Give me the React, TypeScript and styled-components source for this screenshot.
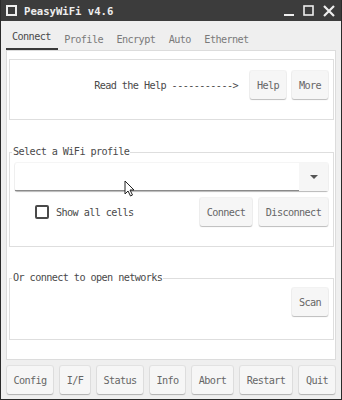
import React from "react";
import styled, { createGlobalStyle } from "styled-components";

const Global = createGlobalStyle`
  html, body { margin: 0; padding: 0; background: #ffffff; }
  * { box-sizing: border-box; }
`;

const mono = `"DejaVu Sans Mono", "Liberation Mono", monospace`;

const Window = styled.div`
  width: 342px;
  height: 400px;
  display: flex;
  flex-direction: column;
  background: #efefef;
  border: 1px solid #2a2a2a;
  border-top: none;
  font-family: ${mono};
  font-size: 10.2px;
  letter-spacing: -0.6px;
  color: #444;
`;

const TitleBar = styled.div`
  height: 21px;
  background: #3c3c3c;
  display: flex;
  align-items: center;
  padding: 0 6px 0 5px;
  color: #eeeeee;
  flex-shrink: 0;
  letter-spacing: 0;
`;

const TitleIcon = styled.div`
  width: 11px;
  height: 11px;
  border: 2px solid #eeeeee;
  background: #3c3c3c;
  margin-right: 7px;
`;

const TitleText = styled.div`
  font-family: ${mono};
  font-weight: bold;
  font-size: 10.6px;
  flex: 1;
`;

const TitleControls = styled.div`
  display: flex;
  align-items: center;
  gap: 9px;
`;

const Body = styled.div`
  flex: 1;
  display: flex;
  flex-direction: column;
  padding: 0 5px 0 5px;
`;

const TabRow = styled.div`
  display: flex;
  height: 29px;
  align-items: flex-end;
  padding-left: 0;
`;

const Tab = styled.div<{ $active?: boolean }>`
  height: 100%;
  display: flex;
  align-items: flex-end;
  padding: 0 7.5px 0 6px;
  color: ${(p) => (p.$active ? "#4a4a4a" : "#7a7a7a")};
  border-bottom: 2px solid ${(p) => (p.$active ? "#3a3a3a" : "transparent")};
  padding-bottom: ${(p) => (p.$active ? "6px" : "3px")};
`;

const Panel = styled.div`
  background: #fff;
  border: 1px solid #dcdcdc;
  height: 310px;
  display: flex;
  flex-direction: column;
  padding: 8px 1px 0 2px;
`;

const Group = styled.fieldset<{ $h: number }>`
  margin: 0;
  border: 1px solid #dedede;
  padding: 0 5px 0 5px;
  height: ${(p) => p.$h}px;
  min-width: 0;
  position: relative;
`;

const Legend = styled.legend`
  padding: 0 1px;
  margin-left: -3px;
  color: #4a4a4a;
  line-height: 10px;
`;

const HelpRow = styled.div`
  display: flex;
  justify-content: flex-end;
  align-items: center;
  gap: 6px;
  padding-top: 11px;
`;

const HelpText = styled.span`
  margin-right: 6px;
  color: #4a4a4a;
`;

const Button = styled.button<{ $w: number }>`
  font-family: ${mono};
  font-size: 10.2px;
  letter-spacing: -0.6px;
  color: #666;
  width: ${(p) => p.$w}px;
  height: 28px;
  background: #f6f6f6;
  border: none;
  border-radius: 2px;
  box-shadow: 0 1px 1px rgba(0, 0, 0, 0.22), 0 0 0 1px rgba(0, 0, 0, 0.05);
  padding: 0;
`;

const Combo = styled.div`
  margin-top: 6px;
  height: 28px;
  display: flex;
  background: #fff;
  border-radius: 2px;
  box-shadow: 0 1px 1px rgba(0, 0, 0, 0.25), 0 0 0 1px rgba(0, 0, 0, 0.04);
  position: relative;
`;

const ComboField = styled.div`
  flex: 1;
  border-bottom: 1px solid #8a8a8a;
`;

const ComboArrow = styled.div`
  width: 29px;
  background: #f6f6f6;
  display: flex;
  align-items: center;
  justify-content: center;
`;

const Cursor = styled.svg`
  position: absolute;
  left: 109px;
  top: 17px;
`;

const OptionsRow = styled.div`
  display: flex;
  align-items: center;
  margin-top: 7px;
  gap: 7px;
`;

const CheckLabel = styled.label`
  flex: 1;
  display: flex;
  align-items: center;
  padding-left: 20px;
  color: #4a4a4a;
`;

const Box = styled.span`
  width: 14px;
  height: 14px;
  border: 2px solid #4a4a4a;
  border-radius: 2px;
  margin-right: 7px;
`;

const ScanRow = styled.div`
  display: flex;
  justify-content: flex-end;
  margin-top: 5px;
`;

const Spacer = styled.div<{ $h: number }>`
  height: ${(p) => p.$h}px;
  flex-shrink: 0;
`;

const BottomBar = styled.div`
  display: flex;
  gap: 7px;
  margin-top: 6px;
  padding-left: 1px;
`;

export default function App() {
  return (
    <>
      <Global />
      <Window>
        <TitleBar>
          <TitleIcon />
          <TitleText>PeasyWiFi v4.6</TitleText>
          <TitleControls>
            <svg width="10" height="12" viewBox="0 0 10 12">
              <rect x="0" y="9" width="10" height="2" fill="#eeeeee" />
            </svg>
            <svg width="11" height="11" viewBox="0 0 11 11">
              <rect x="1" y="1" width="9" height="9" fill="none" stroke="#eeeeee" strokeWidth="1.6" />
            </svg>
            <svg width="12" height="12" viewBox="0 0 12 12">
              <path d="M1 1 L11 11 M11 1 L1 11" stroke="#eeeeee" strokeWidth="2.2" />
            </svg>
          </TitleControls>
        </TitleBar>
        <Body>
          <TabRow>
            <Tab $active>Connect</Tab>
            <Tab>Profile</Tab>
            <Tab>Encrypt</Tab>
            <Tab>Auto</Tab>
            <Tab>Ethernet</Tab>
          </TabRow>
          <Panel>
            <Group $h={61}>
              <HelpRow>
                <HelpText>Read the Help -----------&gt;</HelpText>
                <Button $w={36}>Help</Button>
                <Button $w={36}>More</Button>
              </HelpRow>
            </Group>
            <Spacer $h={27} />
            <Group $h={100}>
              <Legend>Select a WiFi profile</Legend>
              <Combo>
                <ComboField />
                <ComboArrow>
                  <svg width="8" height="5" viewBox="0 0 8 5">
                    <path d="M0 0 L8 0 L4 4 Z" fill="#555" />
                  </svg>
                </ComboArrow>
                <Cursor width="12" height="18" viewBox="0 0 12 18">
                  <path d="M1 1 L1 14 L4 11 L6.5 16 L8.5 15 L6 10 L10 10 Z" fill="#fff" stroke="#222" strokeWidth="1" />
                </Cursor>
              </Combo>
              <OptionsRow>
                <CheckLabel>
                  <Box />
                  Show all cells
                </CheckLabel>
                <Button $w={52}>Connect</Button>
                <Button $w={69}>Disconnect</Button>
              </OptionsRow>
            </Group>
            <Spacer $h={26} />
            <Group $h={67}>
              <Legend>Or connect to open networks</Legend>
              <ScanRow>
                <Button $w={36}>Scan</Button>
              </ScanRow>
            </Group>
          </Panel>
          <BottomBar>
            <Button $w={46}>Config</Button>
            <Button $w={30}>I/F</Button>
            <Button $w={46}>Status</Button>
            <Button $w={35}>Info</Button>
            <Button $w={41}>Abort</Button>
            <Button $w={52}>Restart</Button>
            <Button $w={36}>Quit</Button>
          </BottomBar>
        </Body>
      </Window>
    </>
  );
}
